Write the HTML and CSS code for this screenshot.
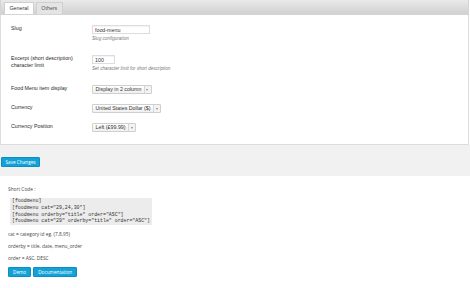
FILE: index.html
```html
<!DOCTYPE html>
<html lang="en">
<head>
    <meta charset="UTF-8">
    <meta name="viewport" content="width=device-width, initial-scale=1.0">
    <title>Food Menu Settings</title>
    <link rel="stylesheet" href="styles.css">
</head>
<body>
<div class="panel">
    <div class="tab-bar">
        <span class="tab active">General</span>
        <span class="tab">Others</span>
    </div>
    <div class="form">
        <div class="row">
            <div class="label">Slug</div>
            <div class="field">
                <input class="text-input slug" type="text" value="food-menu">
                <div class="hint">Slug configuration</div>
            </div>
        </div>
        <div class="row">
            <div class="label">Excerpt (short description)<br>character limit</div>
            <div class="field">
                <input class="text-input small" type="text" value="100">
                <div class="hint">Set character limit for short description</div>
            </div>
        </div>
        <div class="row">
            <div class="label">Food Menu item display</div>
            <div class="field">
                <span class="select"><span class="select-value">Display in 2 column</span><span class="select-arrow"></span></span>
            </div>
        </div>
        <div class="row">
            <div class="label">Currency</div>
            <div class="field">
                <span class="select"><span class="select-value">United States Dollar ($)</span><span class="select-arrow"></span></span>
            </div>
        </div>
        <div class="row">
            <div class="label">Currency Position</div>
            <div class="field">
                <span class="select"><span class="select-value">Left (£99.99)</span><span class="select-arrow"></span></span>
            </div>
        </div>
    </div>
</div>
<div class="submit-bar">
    <button class="btn">Save Changes</button>
</div>
<div class="shortcode">
    <p class="title">Short Code :</p>
    <pre class="code">[foodmenu]
[foodmenu cat="29,24,30"]
[foodmenu orderby="title" order="ASC"]
[foodmenu cat="29" orderby="title" order="ASC"]</pre>
    <p>cat = category id eg. (7,8,95)</p>
    <p>orderby = title, date, menu_order</p>
    <p>order = ASC, DESC</p>
    <div class="links">
        <a class="btn" href="#">Demo</a>
        <a class="btn" href="#">Documentation</a>
    </div>
</div>
</body>
</html>
```

FILE: styles.css
```css
body, html {
    margin: 0;
    padding: 0;
    background: #fff;
}
body {
    font-family: "Liberation Sans", Arial, sans-serif;
    color: #333;
}
.panel {
    width: 469px;
    box-sizing: border-box;
    border: 1px solid #dcdcdc;
    border-top: none;
    background: #fff;
}
.tab-bar {
    height: 15px;
    box-sizing: border-box;
    padding-left: 3px;
    display: flex;
    align-items: flex-end;
    gap: 2px;
    background: linear-gradient(#e9e9e9, #d1d1d1);
    border: 1px solid #d4d4d4;
    border-top: none;
    margin: 0 -1px;
}
.tab {
    height: 12px;
    box-sizing: border-box;
    padding: 0 4.5px;
    font-size: 5.3px;
    line-height: 11px;
    color: #555;
    background: #e4e4e4;
    border: 1px solid #d0d0d0;
    border-bottom: none;
    border-radius: 1px 1px 0 0;
}
.tab.active {
    background: #fff;
    color: #333;
}
.form {
    padding: 10px 10px 12px;
}
.row {
    display: flex;
    margin-bottom: 10px;
}
.row:last-child {
    margin-bottom: 0;
}
.label {
    width: 81px;
    flex-shrink: 0;
    font-size: 5.3px;
    line-height: 7px;
    color: #2a2a2a;
}
.field {
    display: flex;
    flex-direction: column;
    align-items: flex-start;
    font-size: 5.3px;
    line-height: 7px;
}
.text-input {
    display: block;
    height: 9px;
    box-sizing: border-box;
    margin: 0;
    padding: 0 2px;
    border: 1px solid #ddd;
    box-shadow: inset 0 1px 1px rgba(0, 0, 0, 0.05);
    font-family: "Liberation Sans", Arial, sans-serif;
    font-size: 5.3px;
    color: #333;
    outline: none;
}
.text-input.slug {
    width: 58px;
}
.text-input.small {
    width: 23px;
}
.hint {
    margin: 1px 0 3px;
    font-size: 4.6px;
    line-height: 7px;
    font-style: italic;
    color: #777;
}
.select {
    display: flex;
    height: 9px;
    box-sizing: border-box;
    border: 1px solid #cfcfcf;
    border-radius: 1px;
    background: linear-gradient(#fff, #f0f0f0);
    font-size: 5.3px;
    line-height: 7px;
    color: #333;
}
.select-value {
    padding: 0 2.5px;
}
.select-arrow {
    width: 6px;
    border-left: 1px solid #d6d6d6;
    background: #f3f3f3;
    position: relative;
}
.select-arrow::after {
    content: "";
    position: absolute;
    left: 1.5px;
    top: 2.5px;
    border-left: 1.5px solid transparent;
    border-right: 1.5px solid transparent;
    border-top: 2px solid #888;
}
.submit-bar {
    background: #f1f1f1;
    height: 31px;
    box-sizing: border-box;
    padding: 12px 0 0 1px;
}
.btn {
    display: inline-block;
    height: 10px;
    box-sizing: border-box;
    margin: 0;
    padding: 0 3.5px;
    background: #13a2d8;
    border: 1px solid #0d8ec0;
    border-radius: 1px;
    color: #fff;
    font-family: "Open Sans", sans-serif;
    font-size: 4.7px;
    line-height: 8px;
    text-decoration: none;
    cursor: pointer;
    vertical-align: top;
}
.shortcode {
    padding: 10px 8px 0;
    font-family: "Open Sans", sans-serif;
    color: #444;
}
.shortcode p {
    margin: 0 0 5px;
    font-size: 4.8px;
    line-height: 7px;
}
.shortcode .title {
    margin-bottom: 5px;
}
.code {
    display: inline-block;
    margin: 0 0 6px 2px;
    padding: 0 2px;
    background: #ececec;
    font-family: "Liberation Mono", "DejaVu Sans Mono", monospace;
    font-size: 4.9px;
    line-height: 6.8px;
    color: #333;
}
.links {
    display: flex;
    gap: 2px;
    margin-top: 5px;
}
.links .btn {
    padding: 0 4px;
}
```
